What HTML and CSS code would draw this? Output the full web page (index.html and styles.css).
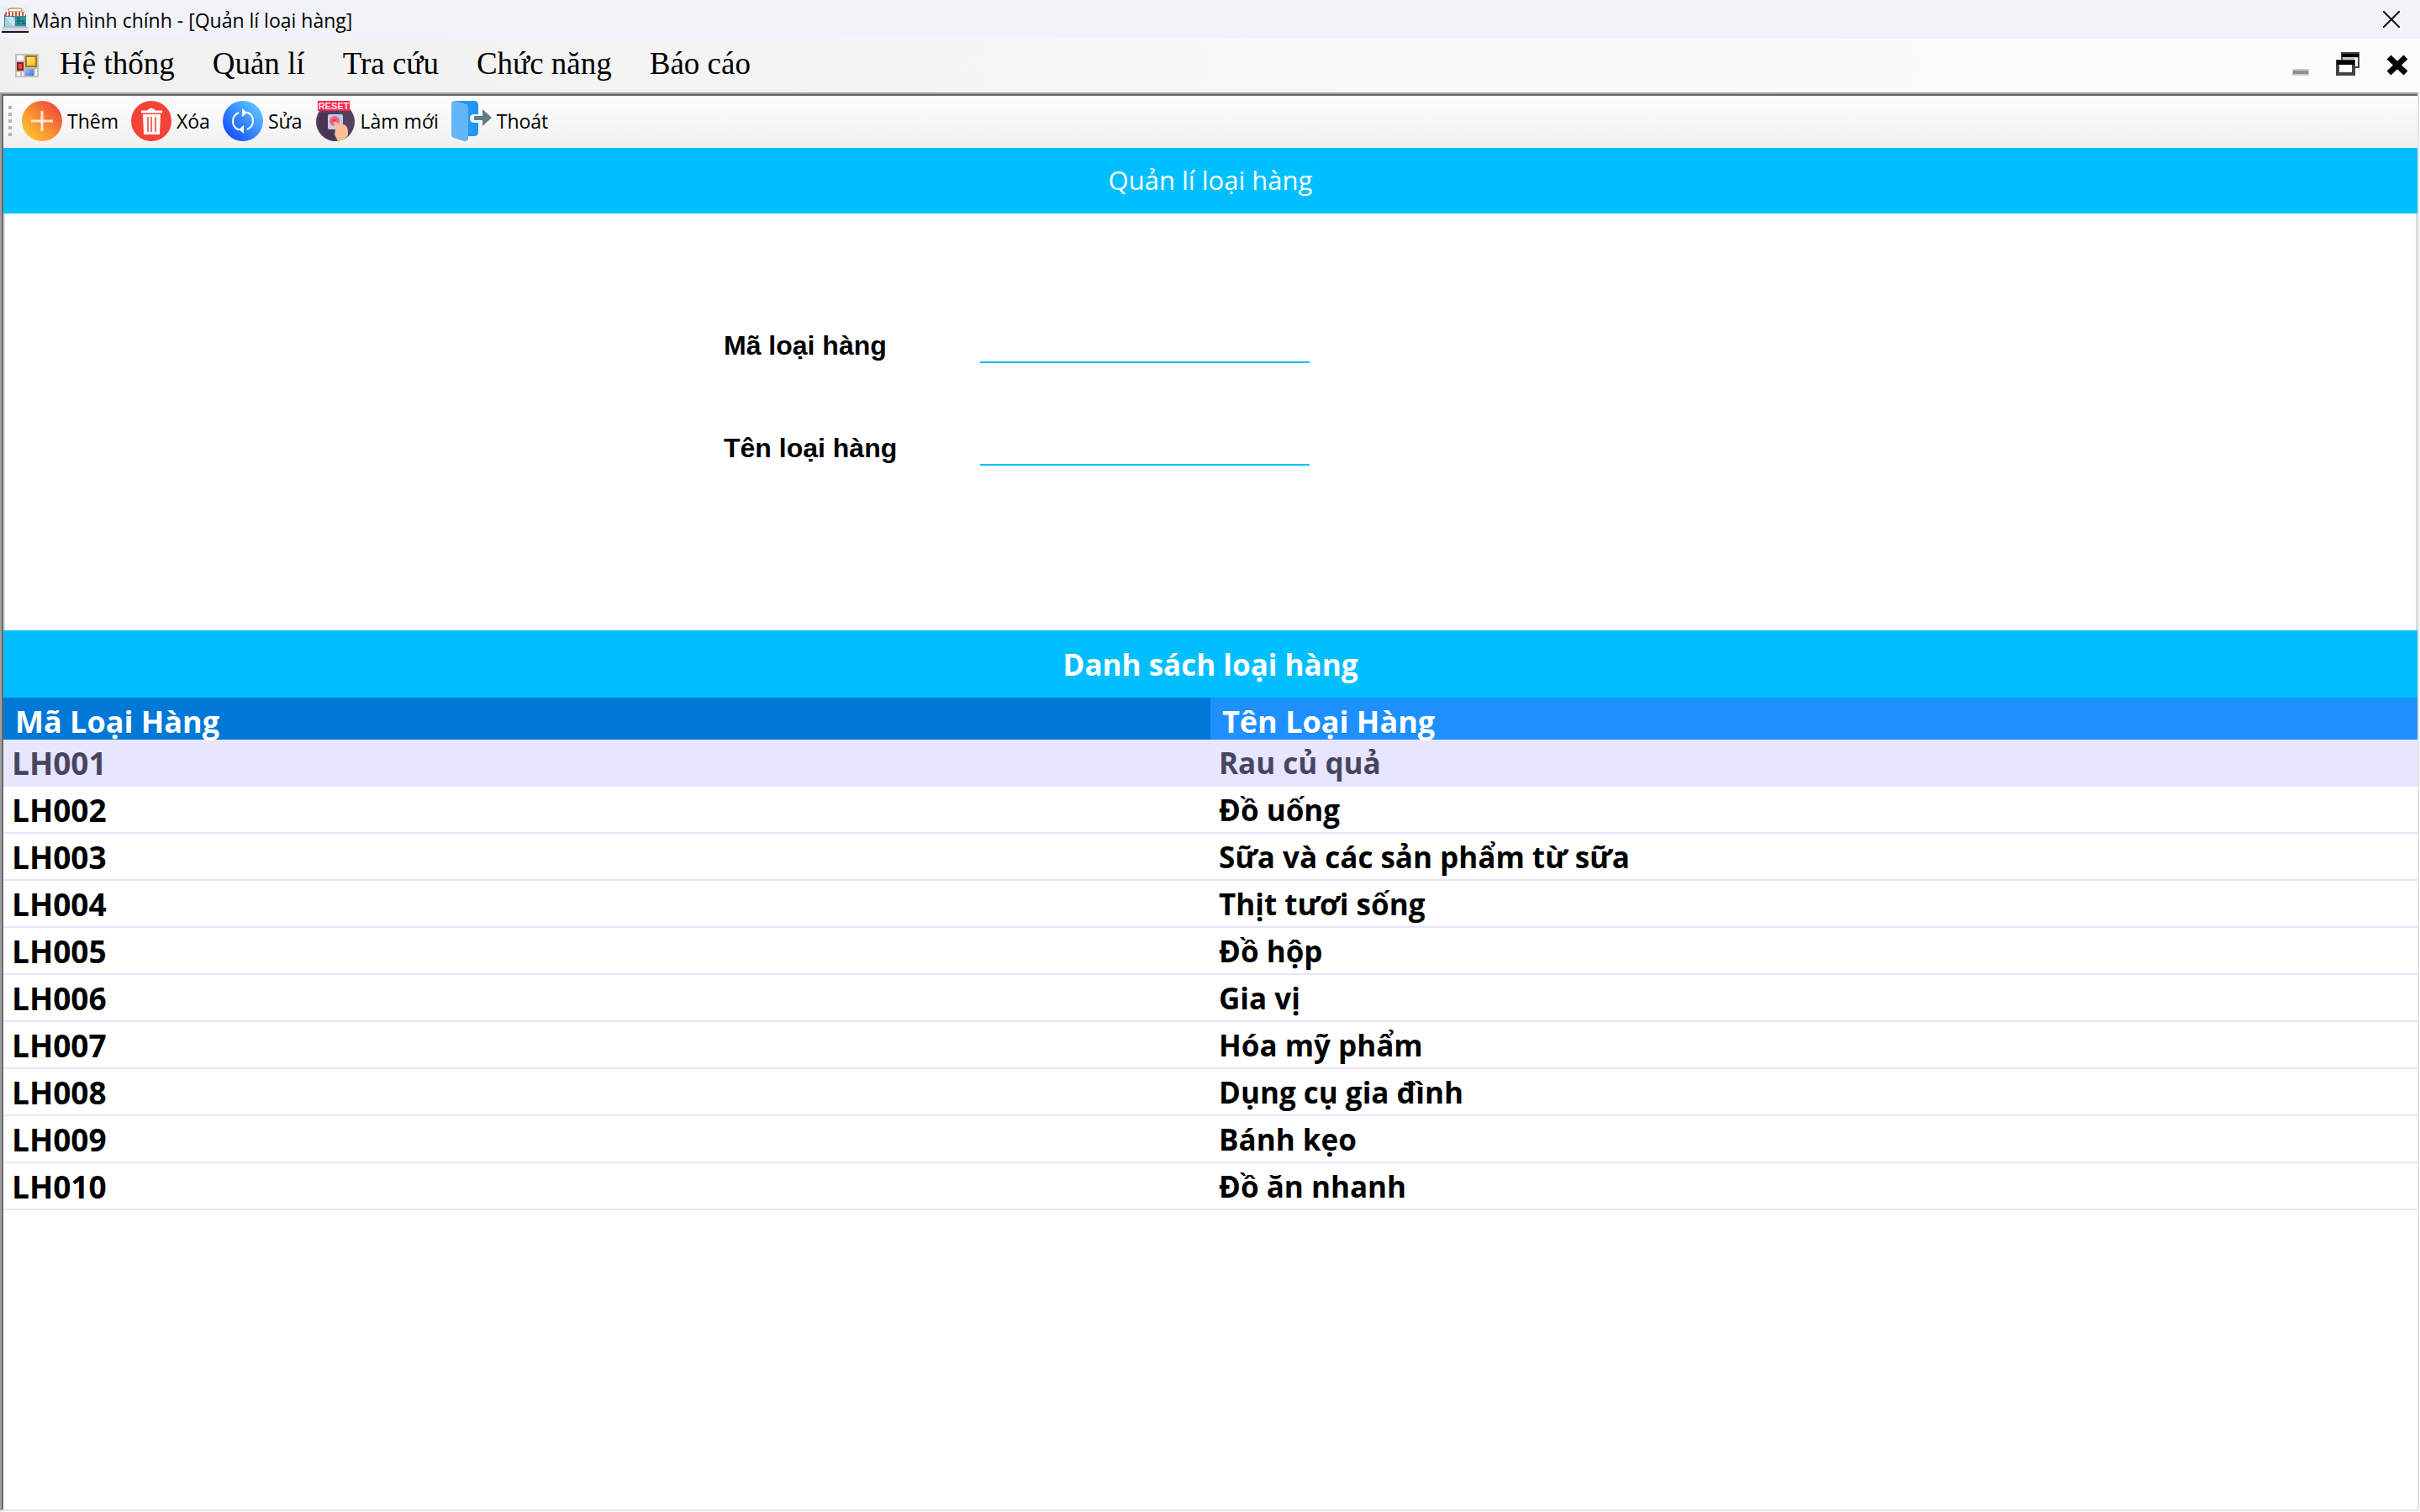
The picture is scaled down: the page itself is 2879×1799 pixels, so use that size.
FILE: index.html
```html
<!DOCTYPE html>
<html lang="vi">
<head>
<meta charset="utf-8">
<meta name="viewport" content="width=device-width, initial-scale=1">
<title>Màn hình chính - [Quản lí loại hàng]</title>
<link rel="stylesheet" href="styles.css">
</head>
<body>
<header class="titlebar">
  <svg class="app-icon" viewBox="0 0 32 32" aria-hidden="true">
    <rect width="32" height="32" fill="#e4f3fa"/>
    <rect y="25" width="32" height="5" fill="#d5d8dc"/>
    <rect y="30" width="32" height="2" fill="#191630"/>
    <rect x="3" y="11" width="26" height="14" fill="#5b7884"/>
    <rect x="4" y="13" width="12" height="11" fill="#9fd3e6"/>
    <path d="M6 13l8 10M10 13l5 7" stroke="#d6eff7" stroke-width="2"/>
    <rect x="17" y="13" width="12" height="10" fill="#1c9aa5"/>
    <path d="M18 15h4M18 18h9M18 21h4M24 21h4" stroke="#063c4c" stroke-width="1"/>
    <path d="M22 17h3" stroke="#e8541f" stroke-width="1"/>
    <rect x="2" y="24" width="28" height="2" fill="#a9bcc5"/>
    <rect x="8" y="3" width="16" height="4" rx="2" fill="#fff" stroke="#e0501f" stroke-width="1"/>
    <path d="M5 7h22l2 4H3z" fill="#e0501f"/>
    <path d="M7 7v5M11 7v5M15 7v5M19 7v5M23 7v5M27 8v4" stroke="#fff" stroke-width="2"/>
  </svg>
  <h1 class="title">Màn hình chính - [Quản lí loại hàng]</h1>
  <button class="icon-button window-close" type="button" aria-label="Đóng">
    <svg width="20" height="20" viewBox="0 0 20 20"><path d="M0 0l20 20M20 0L0 20" stroke="#111" stroke-width="2"/></svg>
  </button>
</header>

<nav class="menubar">
  <svg class="form-icon" viewBox="0 0 28 28" aria-hidden="true">
    <defs>
      <linearGradient id="gold" x1="0" y1="0" x2="1" y2="1"><stop offset="0" stop-color="#ffeb9a"/><stop offset="1" stop-color="#f5b400"/></linearGradient>
      <linearGradient id="sky" x1="0" y1="0" x2="1" y2="1"><stop offset="0" stop-color="#9cc4ff"/><stop offset="1" stop-color="#3c74d8"/></linearGradient>
    </defs>
    <path d="M0 0h28v28H0z" fill="#bfbfbf"/>
    <path d="M2 2h8v6H2zM2 22h4v4H2zM8 22h2v4H8zM24 18h2v8h-2z" fill="#fff"/>
    <rect x="13" y="3" width="12" height="12" fill="url(#gold)" stroke="#a87c00" stroke-width="2"/>
    <rect x="3" y="11" width="6" height="8" fill="#dc5048" stroke="#9b1710" stroke-width="2"/>
    <rect x="12" y="18" width="10" height="8" fill="url(#sky)"/>
  </svg>
  <button type="button">Hệ thống</button>
  <button type="button">Quản lí</button>
  <button type="button">Tra cứu</button>
  <button type="button">Chức năng</button>
  <button type="button">Báo cáo</button>
  <div class="child-controls">
    <button class="icon-button" type="button" aria-label="Thu nhỏ">
      <svg width="20" height="28" viewBox="0 0 20 28"><path d="M0 20h20v8H0z" fill="#ccc"/><path d="M1 22h18v4H1z" fill="#8e8e8e"/></svg>
    </button>
    <button class="icon-button" type="button" aria-label="Khôi phục">
      <svg width="28" height="28" viewBox="0 0 28 28"><path d="M7 1h20v17H7z" fill="#c8c8c8" stroke="#444" stroke-width="2"/><path d="M22 7h4v10h-4z" fill="#fff"/><path d="M7 2h20v4H7z"/><path d="M2 11h19v15H2z" fill="#fff" stroke="#444" stroke-width="4"/><path d="M1 10h21v5H1z"/></svg>
    </button>
    <button class="icon-button" type="button" aria-label="Đóng biểu mẫu">
      <svg width="26" height="28" viewBox="0 0 26 28"><path d="M3 6l20 19M23 6L3 25" stroke="#000" stroke-width="7"/></svg>
    </button>
  </div>
</nav>

<main class="client">
  <div class="toolbar" role="toolbar">
    <span class="grip"></span>
    <button type="button">
      <svg viewBox="0 0 48 48" aria-hidden="true"><defs><linearGradient id="sun" x1="0" y1="1" x2="1" y2="0"><stop offset=".1" stop-color="#ffc72c"/><stop offset=".5" stop-color="#f98a31"/><stop offset=".9" stop-color="#f0433a"/></linearGradient></defs><circle cx="24" cy="24" r="24" fill="url(#sun)"/><path d="M24 12v24M11 24h26" stroke="#ffe9dc" stroke-width="3"/></svg>
      Thêm
    </button>
    <button type="button">
      <svg viewBox="0 0 48 48" aria-hidden="true"><circle cx="24" cy="24" r="24" fill="#f44336"/><path d="M12 13h25M20 12l4-2 4 2" stroke="#fff" stroke-width="3" fill="none"/><path d="M14 16h21l-1 24H15z" fill="#fff"/><path d="M20 19v18M24 19v18M29 19v18" stroke="#f66a60" stroke-width="2"/></svg>
      Xóa
    </button>
    <button type="button">
      <svg viewBox="0 0 48 48" aria-hidden="true"><defs><linearGradient id="sea" x1="0" y1="1" x2="1" y2="0"><stop offset=".15" stop-color="#1653ff"/><stop offset=".9" stop-color="#5fc8ff"/></linearGradient></defs><circle cx="24" cy="24" r="24" fill="url(#sea)"/><path d="M19 14A11 11 0 0 0 18 34h5M29 34A11 11 0 0 0 30 14h-5" fill="none" stroke="#fff" stroke-width="2"/><path d="M23 9l6 5-6 5zM25 29l-6 5 6 5z" fill="#fff"/></svg>
      Sửa
    </button>
    <button type="button">
      <svg viewBox="0 0 48 48" aria-hidden="true"><circle cx="24" cy="25" r="23" fill="#56405f"/><path d="M7 14a22 22 0 0 0 17 34V16z" fill="#4a3555"/><rect x="15" y="16" width="18" height="18" rx="2" fill="#b9d0fb"/><circle cx="23" cy="24" r="6" fill="#fb5f7c"/><circle cx="23" cy="24" r="2" fill="#e8274f"/><path d="M22 25c2-2 4 0 5 2l4 1c5-1 8 4 8 8v5l-5 5-7 2-4-8 1-6z" fill="#fdbd96"/><path d="M3 0h38v12H3z" fill="#f5274f"/><text class="stamp" x="22" y="10" text-anchor="middle">RESET</text></svg>
      Làm mới
    </button>
    <button type="button">
      <svg viewBox="0 0 48 48" aria-hidden="true"><path d="M3 0h24q5 0 5 5v32q0 5-5 5h-8V5z" fill="#2196f3"/><path d="M4 0l12 4q4 1 4 5v35q0 5-5 4L3 44q-3-1-3-4V4q0-4 4-4z" fill="#64b5f6"/><path d="M35 9l15 11-15 12v-6h-8q-5 0-5-5t5-5h8z" fill="#f8f8f8"/><path d="M37 10l11 10-11 10v-7H27v-5h10z" fill="#607d8b"/></svg>
      Thoát
    </button>
  </div>

  <h2 class="banner banner-form">Quản lí loại hàng</h2>

  <form class="entry">
    <label for="ma">Mã loại hàng</label>
    <input id="ma" type="text">
    <label for="ten">Tên loại hàng</label>
    <input id="ten" type="text">
  </form>

  <h2 class="banner banner-list">Danh sách loại hàng</h2>

  <table class="grid">
    <thead>
      <tr><th class="current" scope="col">Mã Loại Hàng</th><th scope="col">Tên Loại Hàng</th></tr>
    </thead>
    <tbody>
      <tr class="selected"><td>LH001</td><td>Rau củ quả</td></tr>
      <tr><td>LH002</td><td>Đồ uống</td></tr>
      <tr><td>LH003</td><td>Sữa và các sản phẩm từ sữa</td></tr>
      <tr><td>LH004</td><td>Thịt tươi sống</td></tr>
      <tr><td>LH005</td><td>Đồ hộp</td></tr>
      <tr><td>LH006</td><td>Gia vị</td></tr>
      <tr><td>LH007</td><td>Hóa mỹ phẩm</td></tr>
      <tr><td>LH008</td><td>Dụng cụ gia đình</td></tr>
      <tr><td>LH009</td><td>Bánh kẹo</td></tr>
      <tr><td>LH010</td><td>Đồ ăn nhanh</td></tr>
    </tbody>
  </table>
</main>
</body>
</html>
```
FILE: styles.css
```css
* { box-sizing: border-box; }

body {
  margin: 0;
  min-height: 100vh;
  display: flex;
  flex-direction: column;
  background: #fff;
  color: #000;
  font-family: "Open Sans", "Noto Sans", sans-serif;
}

h1, h2 { margin: 0; font-weight: 400; }
svg { display: block; flex: none; }

button {
  padding: 0;
  border: 0;
  background: none;
  color: inherit;
  font: inherit;
  white-space: nowrap;
}

/* Window title */
.titlebar {
  display: flex;
  align-items: center;
  height: 46px;
  padding: 0 24px 0 2px;
  background: #f1f3f9;
}
.app-icon { width: 32px; height: 32px; }
.title { margin-left: 4px; padding-top: 2px; font-size: 23px; line-height: 44px; }
.window-close { margin-left: auto; }

/* Menu */
.menubar {
  display: flex;
  align-items: flex-start;
  gap: 45px;
  height: 64px;
  padding: 0 14px 0 18px;
  background: linear-gradient(90deg, #f0f0f0, #fcfcfc 85%);
  font-family: "Liberation Serif", serif;
  font-size: 37px;
  line-height: 60px;
}
.form-icon { width: 28px; height: 28px; margin: 18px -20px 0 0; }
.child-controls {
  display: flex;
  gap: 32px;
  margin: 16px 0 0 auto;
  line-height: 0;
}

/* Sunken client area */
.client {
  flex: 1;
  display: flex;
  flex-direction: column;
  margin: 0 1px 1px 0;
  border: 2px solid;
  border-color: #a0a0a0 #e3e3e3 #e3e3e3 #a0a0a0;
  box-shadow: inset 2px 2px #696969;
  padding: 2px 0 0 2px;
}

.toolbar {
  display: flex;
  align-items: center;
  gap: 15px;
  height: 62px;
  padding: 0 6px 2px;
  background: linear-gradient(#fdfdfd, #f7f7f7 50%, #f0f0f0);
  font-size: 23px;
  line-height: 48px;
}
.toolbar button { display: flex; align-items: center; gap: 6px; }
.toolbar svg { width: 48px; height: 48px; }
.grip {
  width: 4px;
  height: 36px;
  margin-right: -3px;
  background: repeating-linear-gradient(#b4b4b4 0 4px, #fff 4px 6px, transparent 6px 8px);
}
.stamp { fill: #ffe3ea; font: 700 11px "Liberation Sans", sans-serif; }

.banner {
  background: #00bfff;
  color: #fff;
  text-align: center;
}
.banner-form { padding-bottom: 2px; font-size: 31px; line-height: 76px; }
.banner-list { padding-top: 2px; font-size: 35px; font-weight: 700; line-height: 78px; }

/* Entry form */
.entry {
  display: grid;
  grid-template-columns: 855fr 305px 392px 1316fr;
  row-gap: 80px;
  padding: 136px 0 196px;
  border: solid #d9dde0;
  border-width: 0 2px;
}
.entry label {
  grid-column: 2;
  font: 700 32px/42px "Liberation Sans", sans-serif;
}
.entry input {
  grid-column: 3;
  width: 100%;
  min-width: 0;
  height: 42px;
  padding: 0;
  border: 0;
  border-bottom: 2px solid #00bfff;
  outline: 0;
  background: transparent;
  font: 32px "Liberation Sans", sans-serif;
}

/* Category list */
.grid {
  width: 100%;
  table-layout: fixed;
  border-collapse: separate;
  border-spacing: 0;
  font-weight: 700;
  text-align: left;
}
.grid th {
  height: 50px;
  padding: 8px 0 0 14px;
  background: #1e90ff;
  color: #fff;
  font-size: 36px;
  line-height: 42px;
}
.grid th.current { background: #0078d7; }
.grid td {
  height: 56px;
  padding: 2px 0 0 10px;
  border-bottom: 2px solid #e7e5ff;
  font-size: 35px;
  line-height: 52px;
}
.grid td:first-child { font-size: 37px; }
.selected { background: #e7e5ff; color: #47455e; }
```
